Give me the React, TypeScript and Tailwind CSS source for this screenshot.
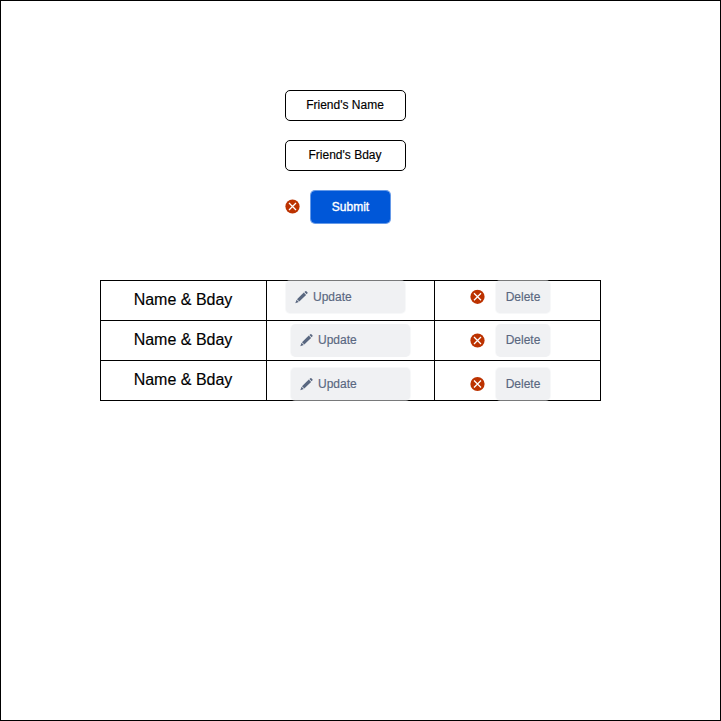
function ErrorIcon({ className = "" }: { className?: string }) {
  return (
    <svg className={`size-[15px] shrink-0 ${className}`} viewBox="0 0 15 15" fill="none">
      <circle cx="7.5" cy="7.5" r="7.1" fill="#BC3200" />
      <path d="M4 4L11 11M11 4L4 11" stroke="#fff" strokeWidth="1.3" />
    </svg>
  );
}

function PencilIcon() {
  return (
    <svg className="size-[13px] shrink-0" viewBox="0 0 13 13" fill="#596780">
      <path d="M8.8 1.6L11.1 3.9L4.3 10.6L2 8.3Z" />
      <path d="M9.4 1.1L10.4 0.2Q10.9 -0.1 11.4 0.3L12.4 1.3Q12.8 1.8 12.5 2.3L11.6 3.3Z" />
      <path d="M1.6 8.8L3.8 11L0.3 12.3Z" />
    </svg>
  );
}

function Field({ label }: { label: string }) {
  return (
    <div className="flex h-[31px] w-[121px] items-center justify-center rounded-[5px] border border-black pb-px pr-px text-xs">
      {label}
    </div>
  );
}

const softButton =
  "flex shrink-0 items-center rounded-[5px] border-[#f0f2f4]/50 bg-[#f0f1f3] bg-clip-padding text-xs text-[#596780]";

const rows = [
  { button: "h-[34px] -mt-px border", indent: "ml-[18px]", icon: "mt-2 translate-y-[0.3px]" },
  { button: "h-[33px] mt-[3px] border-x pb-px", indent: "ml-[23px]", icon: "mt-3" },
  { button: "h-[34px] mt-1.5 border", indent: "ml-[23px]", icon: "mt-[15px] translate-y-[0.5px]" },
];

export default function App() {
  return (
    <main className="h-[721px] w-[721px] overflow-hidden border border-black bg-white font-['Liberation_Sans',Arial,sans-serif] text-black [-webkit-text-stroke:0.15px]">
      <form className="ml-[284px] mt-[89px] flex w-[121px] flex-col">
        <Field label="Friend's Name" />
        <div className="h-[19px]" />
        <Field label="Friend's Bday" />
        <div className="mt-[19px] flex">
          <ErrorIcon className="mt-[9px]" />
          <div className="ml-2.5 flex h-[34px] w-[81px] items-center justify-center rounded-[5px] border border-[#0057d8]/60 bg-[#0057d8] bg-clip-padding text-xs text-white [-webkit-text-stroke:0.35px]">
            Submit
          </div>
        </div>
      </form>
      <section className="ml-[99px] mt-14 w-[501px] border-l border-t border-black">
        {rows.map((row, i) => (
          <div key={i} className="grid grid-cols-[166px_168px_166px] grid-rows-[40px]">
            <div className="flex items-center justify-center border-b border-r border-black pb-0.5 pr-px text-base">
              Name &amp; Bday
            </div>
            <div className="flex items-start border-b border-r border-black">
              <div className={`${softButton} ${row.button} ${row.indent} w-[121px] gap-[5px] pl-[9px]`}>
                <PencilIcon />
                Update
              </div>
            </div>
            <div className="flex items-start border-b border-r border-black">
              <ErrorIcon className={`ml-[35px] ${row.icon}`} />
              <div className={`${softButton} ${row.button} ml-2.5 w-14 justify-center`}>Delete</div>
            </div>
          </div>
        ))}
      </section>
    </main>
  );
}
